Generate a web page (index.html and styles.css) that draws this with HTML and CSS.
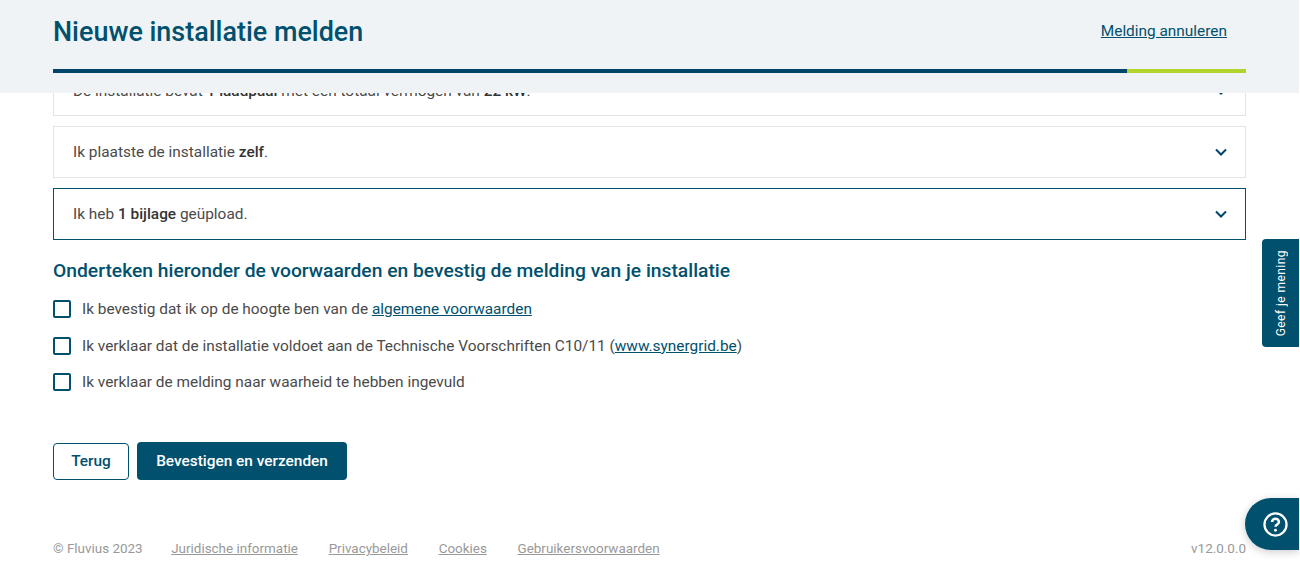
FILE: index.html
```html
<!DOCTYPE html>
<html lang="nl">
<head>
<meta charset="utf-8">
<title>Nieuwe installatie melden</title>
<link rel="stylesheet" href="styles.css">
</head>
<body>
<header class="top">
  <div class="top-row">
    <h1 class="title">Nieuwe installatie melden</h1>
    <a class="cancel" href="#">Melding annuleren</a>
  </div>
  <div class="progress"><div class="progress-done"></div><div class="progress-rest"></div></div>
</header>
<main class="main">
  <div class="rows">
    <div class="row"><span>De installatie bevat <b>1 laadpaal</b> met een totaal vermogen van <b>22 kW</b>.</span><svg class="chev" viewBox="0 0 12 8"><path d="M1 1.5l5 5 5-5"/></svg></div>
    <div class="row"><span>Ik plaatste de installatie <b>zelf</b>.</span><svg class="chev" viewBox="0 0 12 8"><path d="M1 1.5l5 5 5-5"/></svg></div>
    <div class="row row-active"><span>Ik heb <b>1 bijlage</b> geüpload.</span><svg class="chev" viewBox="0 0 12 8"><path d="M1 1.5l5 5 5-5"/></svg></div>
  </div>
  <h2 class="sign">Onderteken hieronder de voorwaarden en bevestig de melding van je installatie</h2>
  <div class="checks">
    <label class="check"><span class="box"></span><span>Ik bevestig dat ik op de hoogte ben van de <a href="#">algemene voorwaarden</a></span></label>
    <label class="check"><span class="box"></span><span>Ik verklaar dat de installatie voldoet aan de Technische Voorschriften C10/11 (<a href="#">www.synergrid.be</a>)</span></label>
    <label class="check"><span class="box"></span><span>Ik verklaar de melding naar waarheid te hebben ingevuld</span></label>
  </div>
  <div class="actions">
    <button class="btn btn-back">Terug</button>
    <button class="btn btn-primary">Bevestigen en verzenden</button>
  </div>
  <footer class="foot">
    <span class="copy">© Fluvius 2023</span>
    <a href="#">Juridische informatie</a>
    <a href="#">Privacybeleid</a>
    <a href="#">Cookies</a>
    <a href="#">Gebruikersvoorwaarden</a>
    <span class="version">v12.0.0.0</span>
  </footer>
</main>
<button class="feedback"><span>Geef je mening</span></button>
<button class="help"><svg viewBox="0 0 24 24" width="25" height="25"><circle cx="12" cy="12" r="10.6" fill="none" stroke="#fff" stroke-width="2.2"/><path d="M8.7 9.7a3.3 3.3 0 0 1 6.6 0c0 2.3-3.3 2.4-3.3 4.5" fill="none" stroke="#fff" stroke-width="2.4"/><circle cx="12" cy="17.5" r="1.4" fill="#fff"/></svg></button>
</body>
</html>
```
FILE: styles.css
```css
* { box-sizing: border-box; }
html, body { margin: 0; height: 100%; }
body {
  font-family: Roboto, "Liberation Sans", sans-serif;
  font-size: 15.4px;
  color: #4a4a4a;
  background: #fff;
  overflow: hidden;
}
a { color: #00506e; }
b { font-weight: 500; color: #333; }

.top {
  position: fixed;
  top: 0; left: 0; right: 1px;
  height: 93px;
  padding: 0 53px;
  background: #eff3f6;
  z-index: 2;
}
.top-row {
  height: 69px;
  display: flex;
  justify-content: space-between;
  align-items: flex-start;
}
.title {
  margin: 14px 0 0;
  font-size: 26.95px;
  line-height: 36px;
  font-weight: 500;
  color: #00506e;
}
.cancel { margin: 21px 19px 0 0; font-size: 15.4px; line-height: 20px; }
.progress { display: flex; height: 4px; }
.progress-done { width: 1074px; background: #00456a; }
.progress-rest { flex: 1; background: #b1d42a; }

.main { padding: 65px 54px 0 53px; }
.rows { display: flex; flex-direction: column; gap: 10px; }
.row {
  height: 52px;
  padding: 0 18px 0 19px;
  display: flex;
  align-items: center;
  justify-content: space-between;
  border: 1px solid #e4e4e4;
  background: #fff;
}
.row:first-child { height: 51px; }
.row-active { border-color: #00506e; }
.chev { width: 12px; height: 8px; fill: none; stroke: #00456a; stroke-width: 2; }

.sign {
  margin: 18px 0 0;
  font-size: 19.25px;
  line-height: 26px;
  font-weight: 500;
  color: #00506e;
}
.checks { margin-top: 14px; display: flex; flex-direction: column; gap: 14.6px; }
.check { display: flex; align-items: center; gap: 11px; line-height: 22px; }
.box {
  width: 18px; height: 18px;
  border: 2px solid #00506e;
  border-radius: 2px;
  background: #fff;
}

.actions { margin-top: 49px; display: flex; gap: 8px; align-items: center; }
.btn {
  font-family: inherit;
  font-size: 15.4px;
  font-weight: 500;
  border-radius: 4px;
  padding: 0;
}
.btn-back {
  width: 76px; height: 37px;
  background: #fff;
  border: 1px solid #00506e;
  color: #00506e;
}
.btn-primary {
  width: 210px; height: 38px;
  background: #00506e;
  border: 0;
  color: #fff;
}

.foot {
  margin-top: 60px;
  display: flex;
  align-items: center;
  gap: 30.7px;
  font-size: 13.45px;
  line-height: 18px;
  color: #999;
}
.foot a { color: #999; }
.copy { margin-right: -2.2px; }
.version { margin-left: auto; }

.feedback {
  position: fixed;
  right: 1px; top: 239px;
  width: 37px; height: 108px;
  padding: 0;
  border: 0;
  border-radius: 4px 0 0 4px;
  background: #00506e;
  color: #fff;
  font-family: inherit;
  font-size: 12px;
  letter-spacing: .45px;
  display: flex;
  align-items: center;
  justify-content: center;
}
.feedback span { writing-mode: vertical-rl; transform: rotate(180deg); white-space: nowrap; }
.help {
  position: fixed;
  right: 1px; top: 498px;
  width: 54px; height: 52px;
  padding: 0 0 0 6px;
  border: 0;
  border-radius: 26px 0 0 26px;
  background: #00506e;
  box-shadow: 0 2px 8px rgba(0,0,0,.2);
  display: flex;
  align-items: center;
  justify-content: center;
}
```
